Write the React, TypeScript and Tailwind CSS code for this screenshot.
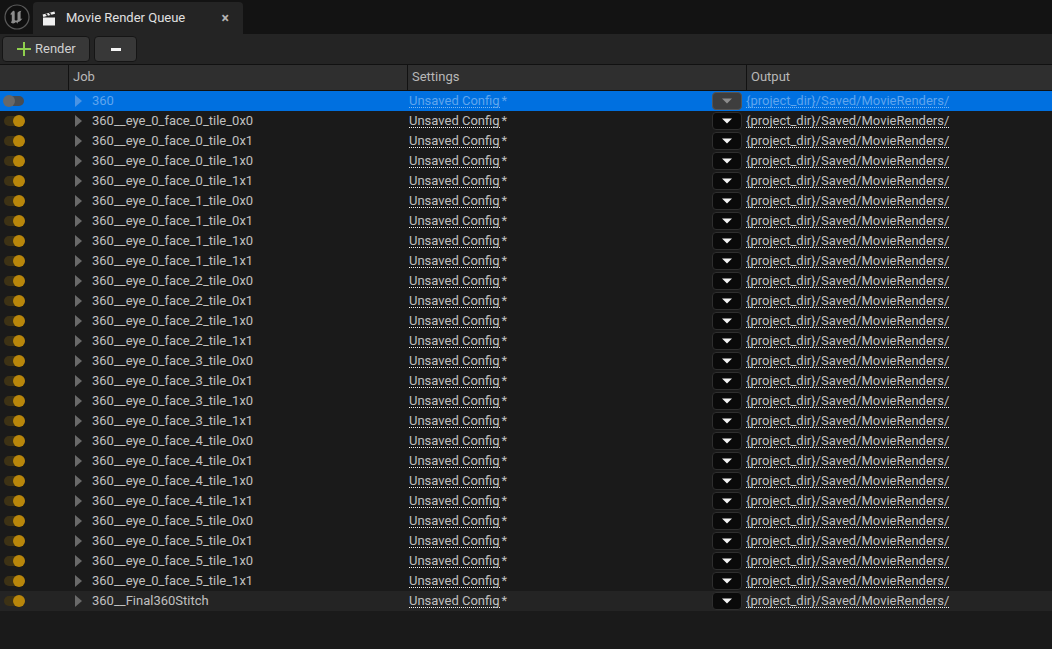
const tiles: string[] = [];
for (let face = 0; face < 6; face++) {
  for (const tile of ["0x0", "0x1", "1x0", "1x1"]) {
    tiles.push(`360__eye_0_face_${face}_tile_${tile}`);
  }
}

const UnrealLogo = () => (
  <svg width="26" height="26" viewBox="0 0 26 26" fill="none">
    <circle cx="13" cy="13" r="12" fill="#0f0f0f" stroke="#5a5a5a" strokeWidth="1.2" />
    <path
      d="M10 6.500c-2 1-3.300 2.500-3.700 4.500.9-.8 1.500-.6 1.500.4v5.400c0 .6-.4 1.100-1 1.400 1.700 1.700 3.500 1.600 5.200-.2l1.500 1.500.3-.2v-1.300c1.800-.3 3.300-1.700 4.700-3.600-.8.500-1.400.6-1.900.3V8.600c0-.7.300-1.300 1-1.800-1.900 0-3.200.8-4.100 1.900v7.300c-.8.700-2 .7-2.800 0V8.500c0-.8-.1-1.500-.9-2z"
      fill="#8c8c8c"
    />
  </svg>
);

const ClapperIcon = () => (
  <svg width="14" height="15" viewBox="0 0 14 15" fill="#f0f0f0">
    <path d="M1 6.500h12V14.500H1z" />
    <path d="M.6 3.600 12.400.4l.7 2.400L1.300 6z" />
    <path d="M3.300 3 4.900 4.900 6.200 4.600 4.600 2.600zM6.700 2 8.300 4 9.600 3.600 8 1.700z" fill="#242424" />
  </svg>
);

const Toggle = ({ selected }: { selected: boolean }) =>
  selected ? (
    <div className="relative ml-[4px] h-[10px] w-[20px] rounded-full bg-[#474c52]">
      <div className="absolute left-[-1px] top-[-1px] h-[12px] w-[12px] rounded-full bg-[#686868]" />
    </div>
  ) : (
    <div className="relative ml-[4px] h-[10px] w-[20px] rounded-full bg-[#3d3215]">
      <div className="absolute right-[-1px] top-[-1px] h-[12px] w-[12px] rounded-full bg-[#b8860b]" />
    </div>
  );

const Row = ({ name, selected, last }: { name: string; selected?: boolean; last?: boolean }) => {
  const textColor = selected ? "text-[#5fa5ee]" : "text-[#c0c0c0]";
  const dots = selected
    ? "bg-[repeating-linear-gradient(90deg,#7ab6f2_0_1px,transparent_1px_2px)]"
    : "bg-[repeating-linear-gradient(90deg,#f0f0f0_0_1px,transparent_1px_2px)]";
  return (
    <div
      className={`flex h-[20px] items-center text-[13px] ${selected ? "bg-[#0070e0]" : last ? "bg-[#242424]" : "bg-[#1a1a1a]"}`}
    >
      <div className="flex w-[69px] items-center">
        <Toggle selected={!!selected} />
      </div>
      <div className={`flex w-[339px] items-center ${textColor}`}>
        <svg width="8" height="12" viewBox="0 0 8 12" className="ml-[6px] mr-[9px]">
          <path d="M0 0l7 6-7 6z" fill={selected ? "#4a94e4" : "#6a6a6a"} />
        </svg>
        <span>{name}</span>
      </div>
      <div className={`flex w-[304px] items-center pl-[1px] ${textColor}`}>
        <span className={`h-[16px] bg-[length:100%_1px] bg-[position:0_14px] bg-no-repeat leading-[15px] ${dots}`}>
          Unsaved Config
        </span>
        <span className="ml-[2px]">*</span>
      </div>
      <div
        className={`flex h-[18px] w-[30px] items-center justify-center rounded-[4px] border ${selected ? "border-[#555555] bg-[#3e3e3e]" : "border-[#2e2e2e] bg-[#0a0a0a]"}`}
      >
        <svg width="10" height="6" viewBox="0 0 10 6">
          <path d="M0 .5h10L5 5.500z" fill={selected ? "#8c8c8c" : "#f4f4f4"} />
        </svg>
      </div>
      <div className={`ml-[4px] flex items-center ${textColor}`}>
        <span className={`h-[16px] bg-[length:100%_1px] bg-[position:0_14px] bg-no-repeat leading-[15px] ${dots}`}>
          {"{project_dir}/Saved/MovieRenders/"}
        </span>
      </div>
    </div>
  );
};

export default function App() {
  return (
    <div className="flex h-[649px] w-[1052px] flex-col overflow-hidden bg-[#1a1a1a] font-['Roboto',sans-serif]">
      {/* tab strip */}
      <div className="flex h-[34px] items-end bg-[#131313]">
        <div className="flex h-[34px] w-[33px] items-center justify-center pl-[1px]">
          <UnrealLogo />
        </div>
        <div className="flex h-[32px] w-[210px] items-center rounded-t-[4px] bg-[#242424] pl-[9px] pr-[14px]">
          <ClapperIcon />
          <span className="ml-[10px] text-[13px] text-[#e0e0e0]">Movie Render Queue</span>
          <span className="ml-auto text-[14px] font-bold leading-none text-[#b4b4b4]">×</span>
        </div>
      </div>
      {/* toolbar */}
      <div className="flex h-[30px] items-center gap-[4px] bg-[#242424] pl-[2px]">
        <button className="flex h-[26px] w-[88px] items-center rounded-[4px] border border-[#151515] bg-[#383838] pl-[14px] text-[13px] text-[#d0d0d0]">
          <svg width="14" height="14" viewBox="0 0 14 14">
            <path d="M6 0h2v6h6v2H8v6H6V8H0V6h6z" fill="#8fcf4e" />
          </svg>
          <span className="ml-[4px]">Render</span>
        </button>
        <button className="flex h-[26px] w-[43px] items-center justify-center rounded-[4px] border border-[#151515] bg-[#383838]">
          <span className="h-[3px] w-[10px] bg-[#f4f4f4]" />
        </button>
      </div>
      {/* table header */}
      <div className="flex h-[27px] border-y border-[#111111] bg-[#2f2f2f] text-[13px] text-[#b8b8b8]">
        <div className="w-[69px] border-r border-[#111111]" />
        <div className="flex w-[339px] items-center border-r border-[#111111] pb-[1px] pl-[4px]">Job</div>
        <div className="flex w-[339px] items-center border-r border-[#111111] pb-[1px] pl-[4px]">Settings</div>
        <div className="flex items-center pb-[1px] pl-[4px]">Output</div>
      </div>
      {/* jobs */}
      <Row name="360" selected />
      {tiles.map((name) => (
        <Row key={name} name={name} />
      ))}
      <Row name="360__Final360Stitch" last />
    </div>
  );
}
